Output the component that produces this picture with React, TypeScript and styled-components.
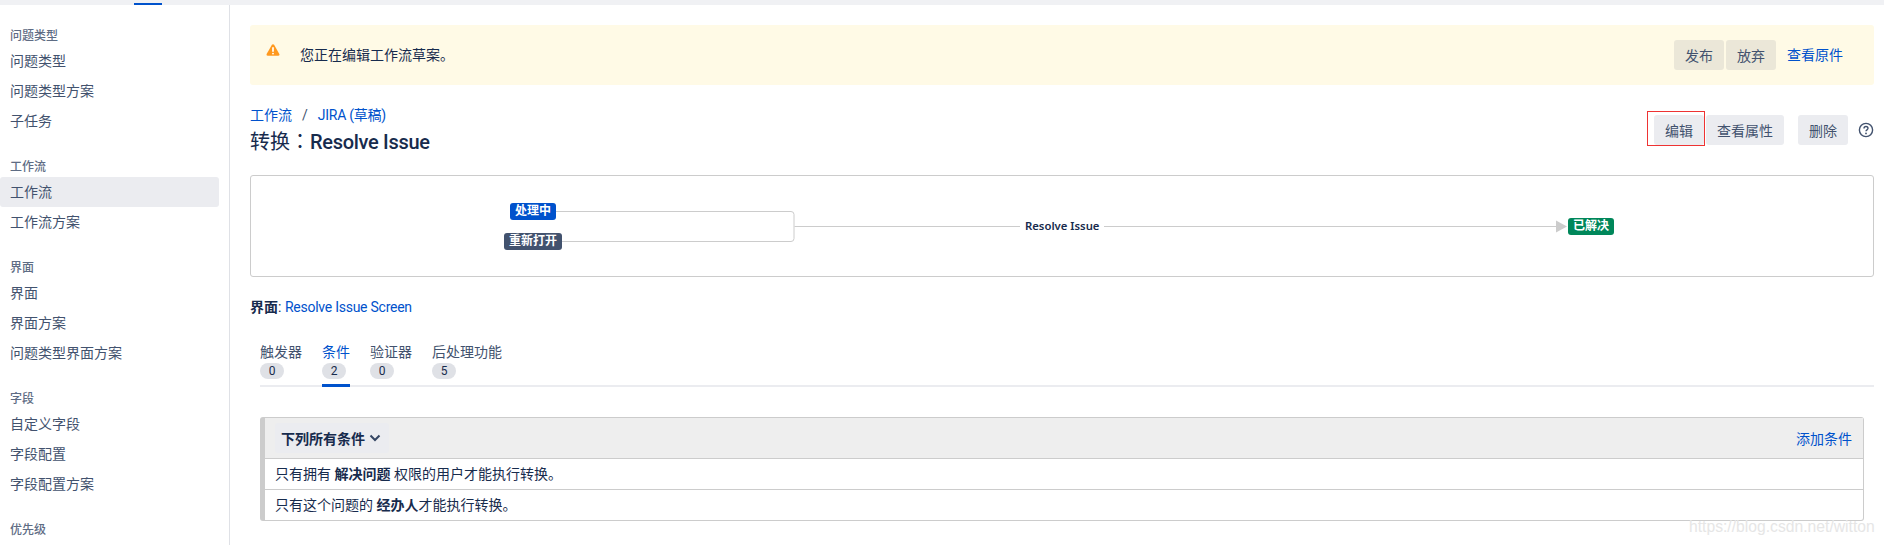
import React from "react";
import styled, { createGlobalStyle } from "styled-components";

const GlobalStyle = createGlobalStyle`
  html, body {
    margin: 0;
    padding: 0;
    height: 545px;
    overflow: hidden;
    background: #fff;
    color: #172b4d;
    font-family: Roboto, "Noto Sans CJK SC", sans-serif;
    font-size: 14px;
  }
  * { box-sizing: border-box; }
`;

const Page = styled.div`
  position: relative;
  width: 1884px;
  height: 545px;
  overflow: hidden;
`;

const TopBar = styled.div`
  position: relative;
  height: 5px;
  background: #f0f1f4;
  &::after {
    content: "";
    position: absolute;
    left: 134px;
    bottom: 0;
    width: 28px;
    height: 2px;
    background: #0052cc;
  }
`;

const Layout = styled.div`
  display: flex;
  height: 540px;
`;

const Sidebar = styled.nav`
  flex: 0 0 230px;
  padding-top: 21px;
  padding-right: 10px;
  border-right: 1px solid #dfe1e6;
`;

const Group = styled.div`
  margin-bottom: 21px;
`;

const GroupTitle = styled.div`
  height: 20px;
  line-height: 20px;
  padding-left: 10px;
  font-size: 12px;
  font-weight: 500;
  color: #5e6c84;
`;

const NavItem = styled.div<{ $active?: boolean }>`
  height: 30px;
  line-height: 30px;
  padding-left: 10px;
  font-size: 14px;
  color: #42526e;
  border-radius: 3px;
  background: ${(p) => (p.$active ? "#ebecf0" : "transparent")};
`;

const Main = styled.main`
  flex: 1;
  padding: 20px 10px 0 20px;
`;

const Banner = styled.div`
  display: flex;
  align-items: center;
  height: 60px;
  padding: 0 31px 0 16px;
  background: #fffae6;
  border-radius: 3px;
`;

const BannerIcon = styled.svg`
  width: 14px;
  height: 12px;
  margin-bottom: 10px;
`;

const BannerText = styled.div`
  flex: 1;
  margin: 0 0 2px 20px;
  color: #172b4d;
`;

const Link = styled.a`
  color: #0052cc;
  text-decoration: none;
`;

// latin link text runs a little narrower than Roboto in the original
const TightLink = styled(Link)`
  letter-spacing: -0.25px;
`;

const Button = styled.div<{ $tone?: "warn" }>`
  position: relative;
  display: inline-flex;
  align-items: center;
  justify-content: center;
  height: 30px;
  padding: 0 11px;
  border-radius: 3px;
  color: #42526e;
  background: ${(p) => (p.$tone === "warn" ? "#ebe7d8" : "#ebecf0")};
`;

const ButtonGroup = styled.div`
  display: flex;
  gap: 2px;
`;

const MarkedButton = styled(Button)`
  &::after {
    content: "";
    position: absolute;
    left: -7px;
    top: -4px;
    right: -1px;
    bottom: -1px;
    border: 1px solid #ee3333;
  }
`;

const BannerLink = styled(Link)`
  margin: 0 0 2px 11px;
`;

const Header = styled.div`
  display: flex;
  justify-content: space-between;
  align-items: flex-start;
  margin-top: 20px;
`;

const Crumbs = styled.div`
  display: flex;
  gap: 10px;
  height: 20px;
  line-height: 20px;
  color: #42526e;
`;

const Title = styled.h1`
  height: 30px;
  margin: 1px 0 0;
  font-size: 20px;
  line-height: 30px;
  font-weight: 500;
  letter-spacing: -0.3px;
  color: #172b4d;
`;

// the CJK part of the heading is regular weight, with the colon centred in its cell
const TitlePrefix = styled.span`
  font-family: "Noto Sans CJK TC", sans-serif;
  font-weight: 400;
  letter-spacing: 0;
`;

const Actions = styled.div`
  display: flex;
  align-items: center;
  margin-top: 10px;
`;

const DeleteButton = styled(Button)`
  margin-left: 14px;
`;

const HelpIcon = styled.svg`
  width: 16px;
  height: 16px;
  margin-left: 10px;
`;

const Diagram = styled.div`
  position: relative;
  height: 102px;
  margin-top: 19px;
  border: 1px solid #ccc;
  border-radius: 3px;
`;

const DiagramLines = styled.svg`
  position: absolute;
  left: 0;
  top: 0;
  width: 100%;
  height: 100%;
`;

const StatusNode = styled.span<{ $bg: string; $x: number; $y: number }>`
  position: absolute;
  left: ${(p) => p.$x}px;
  top: ${(p) => p.$y}px;
  height: 17px;
  line-height: 17px;
  padding: 0 5px;
  border-radius: 3px;
  font-size: 12px;
  font-weight: 700;
  color: #fff;
  background: ${(p) => p.$bg};
`;

const TransitionLabel = styled.span`
  position: absolute;
  left: 769px;
  top: 42px;
  height: 16px;
  line-height: 16px;
  padding: 0 5px;
  font-family: "Noto Sans", sans-serif;
  font-size: 11.3px;
  font-weight: 600;
  color: #172b4d;
  background: #fff;
`;

const ScreenRow = styled.div`
  height: 20px;
  line-height: 20px;
  margin-top: 20px;
  & > b {
    font-weight: 700;
  }
`;

const Tabs = styled.div`
  display: flex;
  gap: 20px;
  margin: 25px 0 0 10px;
  border-bottom: 2px solid #ebecf0;
`;

const Tab = styled.div<{ $active?: boolean }>`
  position: relative;
  height: 43px;
  color: ${(p) => (p.$active ? "#0052cc" : "#42526e")};
  &::after {
    content: "";
    display: ${(p) => (p.$active ? "block" : "none")};
    position: absolute;
    left: 0;
    right: 0;
    bottom: -2px;
    height: 3px;
    background: #0052cc;
  }
`;

const TabLabel = styled.div`
  height: 21px;
  line-height: 20px;
`;

const TabCount = styled.div`
  width: 24px;
  height: 16px;
  line-height: 16px;
  border-radius: 8px;
  text-align: center;
  font-size: 12px;
  color: #172b4d;
  background: #dfe1e6;
`;

const Table = styled.div`
  margin: 30px 10px 0 10px;
  border: 1px solid #ccc;
  border-left: 5px solid #ccc;
  border-radius: 3px;
`;

const TableHead = styled.div`
  display: flex;
  align-items: center;
  justify-content: space-between;
  height: 41px;
  padding: 0 11px 0 10px;
  background: #eee;
  border-bottom: 1px solid #ccc;
`;

const Dropdown = styled.div`
  display: flex;
  align-items: center;
  gap: 4px;
  height: 30px;
  padding: 0 8px 0 6px;
  border-radius: 3px;
  background: #ebecf0;
  font-weight: 700;
  color: #172b4d;
`;

const TableRow = styled.div`
  height: 31px;
  line-height: 30px;
  padding-left: 10px;
  color: #172b4d;
  border-bottom: 1px solid #ccc;
  &:last-child {
    border-bottom: 0;
    height: 30px;
  }
  & > b {
    font-weight: 700;
  }
`;

const Watermark = styled.div`
  position: absolute;
  left: 1689px;
  top: 515px;
  font-family: "Liberation Sans", sans-serif;
  font-size: 15.7px;
  line-height: 24px;
  color: #e6e6e6;
`;

const navGroups = [
  { title: "问题类型", items: ["问题类型", "问题类型方案", "子任务"] },
  { title: "工作流", items: ["工作流", "工作流方案"] },
  { title: "界面", items: ["界面", "界面方案", "问题类型界面方案"] },
  { title: "字段", items: ["自定义字段", "字段配置", "字段配置方案"] },
  { title: "优先级", items: [] as string[] },
];

const tabs = [
  { label: "触发器", count: 0 },
  { label: "条件", count: 2, active: true },
  { label: "验证器", count: 0 },
  { label: "后处理功能", count: 5 },
];

const App = () => (
  <Page>
    <GlobalStyle />
    <TopBar />
    <Layout>
      <Sidebar>
        {navGroups.map((group) => (
          <Group key={group.title}>
            <GroupTitle>{group.title}</GroupTitle>
            {group.items.map((item, i) => (
              <NavItem key={item} $active={group.title === "工作流" && i === 0}>
                {item}
              </NavItem>
            ))}
          </Group>
        ))}
      </Sidebar>

      <Main>
        <Banner>
          <BannerIcon viewBox="0 0 16 14">
            <path
              d="M6.7 1 .6 11.6C.1 12.6.7 13.6 1.8 13.6h12.4c1.1 0 1.7-1 1.2-2L9.3 1C8.7 0 7.3 0 6.7 1Z"
              fill="#ff991f"
            />
            <rect x="7" y="3.6" width="2" height="5.6" rx="1" fill="#fff" />
            <circle cx="8" cy="11.2" r="1.1" fill="#fff" />
          </BannerIcon>
          <BannerText>您正在编辑工作流草案。</BannerText>
          <ButtonGroup>
            <Button $tone="warn">发布</Button>
            <Button $tone="warn">放弃</Button>
          </ButtonGroup>
          <BannerLink>查看原件</BannerLink>
        </Banner>

        <Header>
          <div>
            <Crumbs>
              <Link>工作流</Link>
              <span>/</span>
              <TightLink>JIRA (草稿)</TightLink>
            </Crumbs>
            <Title>
              <TitlePrefix>转换：</TitlePrefix>Resolve Issue
            </Title>
          </div>
          <Actions>
            <ButtonGroup>
              <MarkedButton>编辑</MarkedButton>
              <Button>查看属性</Button>
            </ButtonGroup>
            <DeleteButton>删除</DeleteButton>
            <HelpIcon viewBox="0 0 16 16" fill="none">
              <circle cx="8" cy="8" r="6.6" stroke="#42526e" strokeWidth="1.4" />
              <path
                d="M6 6.4c0-1.2.9-1.9 2-1.9s2 .7 2 1.8c0 1.6-2 1.5-2 3"
                stroke="#42526e"
                strokeWidth="1.4"
              />
              <circle cx="8" cy="11.4" r=".9" fill="#42526e" />
            </HelpIcon>
          </Actions>
        </Header>

        <Diagram>
          <DiagramLines fill="none" stroke="#ccc" strokeWidth="1">
            <path d="M305 35.5H540a3 3 0 0 1 3 3V62.5a3 3 0 0 1-3 3H311" />
            <path d="M543.5 50.5H1305" />
            <path d="M1305 44.5l11 6-11 6z" fill="#ccc" stroke="none" />
          </DiagramLines>
          <StatusNode $bg="#0052cc" $x={259} $y={27}>处理中</StatusNode>
          <StatusNode $bg="#42526e" $x={253} $y={57}>重新打开</StatusNode>
          <TransitionLabel>Resolve Issue</TransitionLabel>
          <StatusNode $bg="#00875a" $x={1317} $y={42}>已解决</StatusNode>
        </Diagram>

        <ScreenRow>
          <b>界面</b>: <TightLink>Resolve Issue Screen</TightLink>
        </ScreenRow>

        <Tabs>
          {tabs.map((tab) => (
            <Tab key={tab.label} $active={tab.active}>
              <TabLabel>{tab.label}</TabLabel>
              <TabCount>{tab.count}</TabCount>
            </Tab>
          ))}
        </Tabs>

        <Table>
          <TableHead>
            <Dropdown>
              下列所有条件
              <svg width="12" height="8" viewBox="0 0 12 8" fill="none">
                <path d="M1.5 1.5 6 6l4.5-4.5" stroke="#344563" strokeWidth="2" />
              </svg>
            </Dropdown>
            <Link>添加条件</Link>
          </TableHead>
          <TableRow>
            只有拥有 <b>解决问题</b> 权限的用户才能执行转换。
          </TableRow>
          <TableRow>
            只有这个问题的 <b>经办人</b>才能执行转换。
          </TableRow>
        </Table>
      </Main>
    </Layout>
    <Watermark>https://blog.csdn.net/witton</Watermark>
  </Page>
);

export default App;
